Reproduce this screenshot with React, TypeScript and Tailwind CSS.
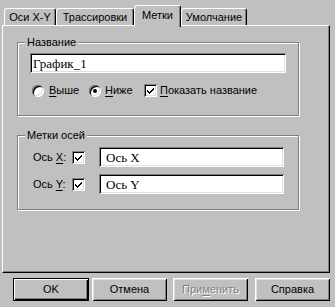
import type { ReactNode } from "react";

const SUNKEN =
  "shadow-[inset_1px_1px_#808080,inset_-1px_-1px_#fff,inset_2px_2px_#000,inset_-2px_-2px_#dfdfdf]";
const RAISED =
  "shadow-[inset_1px_1px_#fff,inset_-1px_-1px_#000,inset_2px_2px_#dfdfdf,inset_-2px_-2px_#808080]";

function Tab({ label, w, active }: { label: string; w: string; active?: boolean }) {
  return (
    <div
      className={`${w} flex justify-center border-t border-l border-r border-t-white border-l-white border-r-black rounded-t-[3px] bg-[#c0c0c0] shadow-[inset_-1px_0_#808080] ${
        active ? "relative z-10 h-[22px] -mb-[2px] pt-[3px]" : "h-[17px] pt-[2px]"
      }`}
    >
      {label}
    </div>
  );
}

function Mn({ children }: { children: ReactNode }) {
  return <span className="underline underline-offset-[2px]">{children}</span>;
}

function Radio({ checked }: { checked?: boolean }) {
  return (
    <span
      className={`w-[12px] h-[12px] rounded-full bg-white flex items-center justify-center shrink-0 ${SUNKEN}`}
    >
      {checked && <span className="w-[4px] h-[4px] rounded-full bg-black" />}
    </span>
  );
}

function Check() {
  return (
    <span className={`w-[13px] h-[13px] bg-white flex items-center justify-center shrink-0 ${SUNKEN}`}>
      <svg width="7" height="7" viewBox="0 0 7 7">
        <path d="M0 2 L0 5 L2 7 L7 2 L7 0 L2 5 Z" fill="#000" shapeRendering="crispEdges" />
      </svg>
    </span>
  );
}

function Field({ value, w, pl }: { value: string; w: string; pl: string }) {
  return (
    <div
      className={`${w} h-[20px] bg-white flex items-center ${pl} ${SUNKEN} font-['Liberation_Serif','Times_New_Roman',serif] text-[13px] leading-[15px]`}
    >
      {value}
    </div>
  );
}

function Group({ title, h, children, className = "" }: { title: string; h: string; children: ReactNode; className?: string }) {
  return (
    <fieldset
      className={`w-[282px] ${h} border border-[#808080] shadow-[1px_1px_0_#fff,inset_1px_1px_0_#fff] ${className}`}
    >
      <legend className="ml-[7px] px-[2px] bg-[#c0c0c0] leading-[13px]">{title}</legend>
      {children}
    </fieldset>
  );
}

function Btn({ children, className = "", def }: { children: ReactNode; className?: string; def?: boolean }) {
  return (
    <div
      className={`h-[23px] flex items-center justify-center bg-[#c0c0c0] ${
        def
          ? "border border-black shadow-[inset_1px_1px_#fff,inset_-1px_-1px_#000,inset_-2px_-2px_#808080]"
          : RAISED
      } ${className}`}
    >
      {children}
    </div>
  );
}

export default function App() {
  return (
    <div className="w-[335px] h-[307px] bg-[#c0c0c0] px-[2px] pt-[5px] font-['Liberation_Sans',Arial,sans-serif] text-[11px] leading-[13px] text-black">
      {/* Tabs */}
      <div className="flex items-end h-[20px] pl-[2px]">
        <Tab label="Оси X-Y" w="w-[52px]" />
        <Tab label="Трассировки" w="w-[78px]" />
        <Tab label="Метки" w="w-[47px]" active />
        <Tab label="Умолчание" w="w-[66px]" />
      </div>

      {/* Panel */}
      <div className="w-[328px] h-[248px] border border-t-white border-l-white border-r-black border-b-black shadow-[inset_-1px_-1px_#808080] pt-[10px] pl-[14px]">
        <Group title="Название" h="h-[80px]">
          <div className="pl-[12px] pt-[4px]">
            <Field value="График_1" w="w-[256px]" pl="pl-[3px]" />
            <div className="flex items-center mt-[11px] h-[13px]">
              <div className="w-[59px] flex items-center pl-[2px]">
                <Radio />
                <span className="ml-[5px]">
                  <Mn>В</Mn>ыше
                </span>
              </div>
              <div className="w-[55px] flex items-center">
                <Radio checked />
                <span className="ml-[4px]">
                  <Mn>Н</Mn>иже
                </span>
              </div>
              <div className="flex items-center">
                <Check />
                <span className="ml-[3px]">
                  <Mn>П</Mn>оказать название
                </span>
              </div>
            </div>
          </div>
        </Group>

        <Group title="Метки осей" h="h-[81px]" className="mt-[13px]">
          <div className="pl-[15px] pt-[5px] flex flex-col gap-[7px]">
            <div className="flex items-center">
              <span className="w-[39px]">
                Ось <Mn>X</Mn>:
              </span>
              <span className="w-[27px]">
                <Check />
              </span>
              <Field value="Ось X" w="w-[185px]" pl="pl-[7px]" />
            </div>
            <div className="flex items-center">
              <span className="w-[39px]">
                Ось <Mn>Y</Mn>:
              </span>
              <span className="w-[27px]">
                <Check />
              </span>
              <Field value="Ось Y" w="w-[185px]" pl="pl-[7px]" />
            </div>
          </div>
        </Group>
      </div>

      {/* Buttons */}
      <div className="flex mt-[5px]">
        <Btn def className="ml-[11px] w-[76px]">
          OK
        </Btn>
        <Btn className="ml-[3px] w-[75px]">Отмена</Btn>
        <Btn className="ml-[6px] w-[75px] text-[#808080] [text-shadow:1px_1px_0_#fff]">
          При<Mn>м</Mn>енить
        </Btn>
        <Btn className="ml-[7px] w-[75px]">Справка</Btn>
      </div>
    </div>
  );
}
